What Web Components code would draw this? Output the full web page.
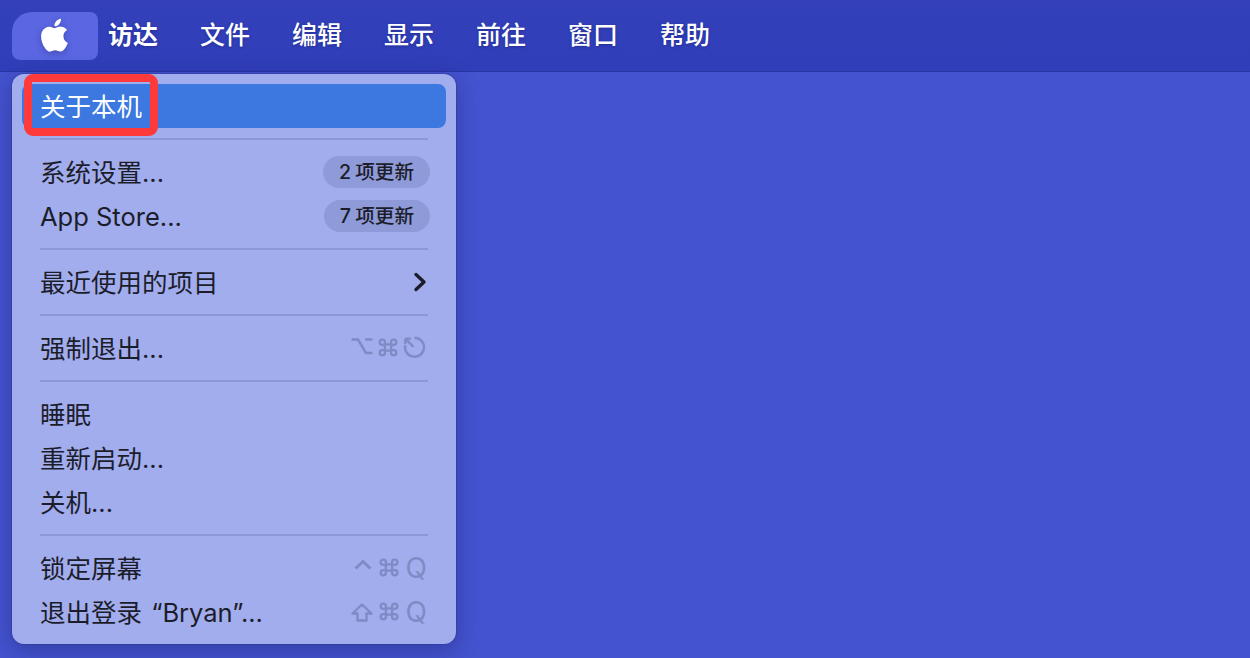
<!DOCTYPE html>
<html lang="zh-CN">
<head>
<meta charset="utf-8">
<title>访达</title>
<style>
  html, body { margin: 0; height: 100%; overflow: hidden; }
  body { font-family: Inter, "Noto Sans CJK SC", sans-serif; }
</style>
</head>
<body>
<mac-screen>
  <mac-menubar slot="bar">
    <mac-bar-apple></mac-bar-apple>
    <mac-bar-item bold>访达</mac-bar-item>
    <mac-bar-item>文件</mac-bar-item>
    <mac-bar-item>编辑</mac-bar-item>
    <mac-bar-item>显示</mac-bar-item>
    <mac-bar-item>前往</mac-bar-item>
    <mac-bar-item>窗口</mac-bar-item>
    <mac-bar-item>帮助</mac-bar-item>
  </mac-menubar>
  <mac-menu>
    <mac-menu-item active callout>关于本机</mac-menu-item>
    <mac-menu-sep></mac-menu-sep>
    <mac-menu-item>系统设置...<update-badge slot="end">2 项更新</update-badge></mac-menu-item>
    <mac-menu-item>App Store...<update-badge slot="end">7 项更新</update-badge></mac-menu-item>
    <mac-menu-sep></mac-menu-sep>
    <mac-menu-item>最近使用的项目<key-glyph slot="end" name="chevron"></key-glyph></mac-menu-item>
    <mac-menu-sep></mac-menu-sep>
    <mac-menu-item>强制退出...<key-combo slot="end"><key-glyph name="option"></key-glyph><key-glyph name="command"></key-glyph><key-glyph name="escape"></key-glyph></key-combo></mac-menu-item>
    <mac-menu-sep></mac-menu-sep>
    <mac-menu-item>睡眠</mac-menu-item>
    <mac-menu-item>重新启动...</mac-menu-item>
    <mac-menu-item>关机...</mac-menu-item>
    <mac-menu-sep></mac-menu-sep>
    <mac-menu-item>锁定屏幕<key-combo slot="end"><key-glyph name="control"></key-glyph><key-glyph name="command"></key-glyph><key-letter>Q</key-letter></key-combo></mac-menu-item>
    <mac-menu-item spaced>退出登录 “Bryan”...<key-combo slot="end"><key-glyph name="shift"></key-glyph><key-glyph name="command"></key-glyph><key-letter>Q</key-letter></key-combo></mac-menu-item>
  </mac-menu>
</mac-screen>

<script>
function shadow(el, html) {
  el.attachShadow({ mode: 'open' }).innerHTML = html;
}

class MacScreen extends HTMLElement {
  constructor() {
    super();
    shadow(this, `
      <style>
        :host { display: grid; grid-template-rows: 72px 1fr; height: 658px; background: #4453cf; overflow: hidden; }
      </style>
      <slot name="bar"></slot>
      <div><slot></slot></div>
    `);
  }
}

class MacMenubar extends HTMLElement {
  constructor() {
    super();
    shadow(this, `
      <style>
        :host { display: flex; align-items: center; height: 72px; padding-left: 12px; box-sizing: border-box;
          background: linear-gradient(#3340ba, #303eb9); color: #fff; box-shadow: inset 0 -1px 0 rgba(30,35,120,.3); }
      </style>
      <slot></slot>
    `);
  }
}

class MacBarApple extends HTMLElement {
  constructor() {
    super();
    shadow(this, `
      <style>
        :host { display: flex; align-items: center; justify-content: center; width: 86px; height: 48px; margin-right: 10px;
          background: #5a66e2; border-radius: 20px 8px 8px 8px; }
        svg { display: block; width: 29.4px; height: 34.3px; margin-top: -1px; filter: drop-shadow(0 2px 3px rgba(20,25,90,.35)); }
      </style>
      <svg viewBox="3.2 1.6 17.8 20.8" fill="#fff"><path d="M18.71 19.5c-.83 1.24-1.71 2.45-3.05 2.47-1.34.03-1.77-.79-3.29-.79-1.53 0-2 .77-3.27.82-1.31.05-2.3-1.32-3.14-2.53C4.25 17 2.94 12.45 4.7 9.39c.87-1.52 2.43-2.48 4.12-2.51 1.28-.02 2.5.87 3.29.87.78 0 2.26-1.07 3.81-.91.65.03 2.47.26 3.64 1.98-.09.06-2.17 1.28-2.15 3.81.03 3.02 2.65 4.03 2.68 4.04-.03.07-.42 1.44-1.38 2.83M13 3.5c.73-.83 1.94-1.46 2.94-1.5.13 1.17-.34 2.35-1.04 3.19-.69.85-1.83 1.51-2.95 1.42-.15-1.15.41-2.35 1.05-3.11z"/></svg>
    `);
  }
}

class MacBarItem extends HTMLElement {
  constructor() {
    super();
    shadow(this, `
      <style>
        :host { display: block; margin-right: 42px; margin-top: -6px; font: 500 25px/36px "Noto Sans CJK SC", sans-serif;
          color: #fff; text-shadow: 0 1px 3px rgba(20,25,100,.45); }
        :host([bold]) { font-weight: 700; }
      </style>
      <slot></slot>
    `);
  }
}

class MacMenu extends HTMLElement {
  constructor() {
    super();
    shadow(this, `
      <style>
        :host { display: block; width: 444px; margin: 2px 0 0 12px; padding: 10px; box-sizing: border-box;
          background: #a2adee; border-radius: 12px; color: #1c1d2b;
          box-shadow: 0 0 0 1px rgba(40,50,140,.35), 0 6px 22px rgba(20,25,90,.38); }
      </style>
      <slot></slot>
    `);
  }
}

class MacMenuItem extends HTMLElement {
  constructor() {
    super();
    shadow(this, `
      <style>
        :host { display: flex; align-items: center; justify-content: space-between; position: relative; height: 44px;
          padding: 0 18px; box-sizing: border-box; border-radius: 8px;
          font: 400 25.5px/44px Inter, "Noto Sans CJK SC", sans-serif; white-space: nowrap; }
        :host([active]) { background: #3c78e0; color: #fff; }
        :host([spaced]) .label { word-spacing: 2px; }
        .label { padding-top: 2px; }
        .callout { display: none; position: absolute; left: 2px; top: -10px; width: 134px; height: 62px;
          box-sizing: border-box; border: 8px solid #ff3a3a; border-radius: 9px; }
        :host([callout]) .callout { display: block; }
      </style>
      <span class="label"><slot></slot></span>
      <slot name="end"></slot>
      <div class="callout"></div>
    `);
  }
}

class MacMenuSep extends HTMLElement {
  constructor() {
    super();
    shadow(this, `
      <style>
        :host { display: flex; align-items: center; height: 22px; padding: 0 18px; }
        div { flex: 1; height: 2px; background: #8b97d6; }
      </style>
      <div></div>
    `);
  }
}

class UpdateBadge extends HTMLElement {
  constructor() {
    super();
    shadow(this, `
      <style>
        :host { display: block; height: 32px; padding: 0 16px; border-radius: 16px; margin-right: -2px; background: #8f9ad8;
          font: 500 19.6px/33px Inter, "Noto Sans CJK SC", sans-serif; word-spacing: -1px; color: #1c1d2b; }
      </style>
      <slot></slot>
    `);
  }
}

class KeyCombo extends HTMLElement {
  constructor() {
    super();
    shadow(this, `
      <style>
        :host { display: flex; align-items: center; gap: 2px; padding-right: 2px; }
      </style>
      <slot></slot>
    `);
  }
}

class KeyLetter extends HTMLElement {
  constructor() {
    super();
    shadow(this, `
      <style>
        :host { display: block; width: 24px; margin-right: -1px; text-align: right; font: 400 28px/44px Inter, sans-serif; color: #7f8bc4; }
      </style>
      <slot></slot>
    `);
  }
}

const GLYPHS = {
  chevron: '<path d="M12 4.5l8 7.5-8 7.5" stroke="#1c1d2b" stroke-width="3.4" stroke-linecap="round" stroke-linejoin="round"/>',
  option: '<path d="M1.5 3.5h6.5l8 13.5h6.5M15 3.5h7.5" stroke-width="2.6"/>',
  command: '<g transform="translate(12 11.5) scale(.88) translate(-12 -12)"><path d="M8.5 8.5h7v7h-7zM8.5 8.5V6A3 3 0 1 0 5.5 9h3M15.5 8.5V6a3 3 0 1 1 3 3h-3M8.5 15.5V18A3 3 0 1 1 5.5 15h3M15.5 15.5V18a3 3 0 1 0 3-3h-3" stroke-width="2.7"/></g>',
  escape: '<path d="M12.5 1.8A9.5 9.5 0 1 1 3.3 9M3.3 2.6l8.2 8.2M3.3 2.6H9M3.3 2.6V8" stroke-width="2.4"/>',
  control: '<path d="M4.5 12.5l7.5-7 7.5 7" stroke-width="3"/>',
  shift: '<path d="M11 4.5L1.5 13.5h5v7h9v-7h5z" stroke-width="2.4" stroke-linejoin="round"/>'
};

class KeyGlyph extends HTMLElement {
  constructor() {
    super();
    shadow(this, `
      <style>
        :host { display: block; width: 24px; height: 24px; }
        svg { display: block; width: 100%; height: 100%; fill: none; stroke: #7f8bc4; }
      </style>
      <svg viewBox="0 0 24 24">${GLYPHS[this.getAttribute('name')] || ''}</svg>
    `);
  }
}

customElements.define('mac-screen', MacScreen);
customElements.define('mac-menubar', MacMenubar);
customElements.define('mac-bar-apple', MacBarApple);
customElements.define('mac-bar-item', MacBarItem);
customElements.define('mac-menu', MacMenu);
customElements.define('mac-menu-item', MacMenuItem);
customElements.define('mac-menu-sep', MacMenuSep);
customElements.define('update-badge', UpdateBadge);
customElements.define('key-combo', KeyCombo);
customElements.define('key-letter', KeyLetter);
customElements.define('key-glyph', KeyGlyph);
</script>
</body>
</html>
